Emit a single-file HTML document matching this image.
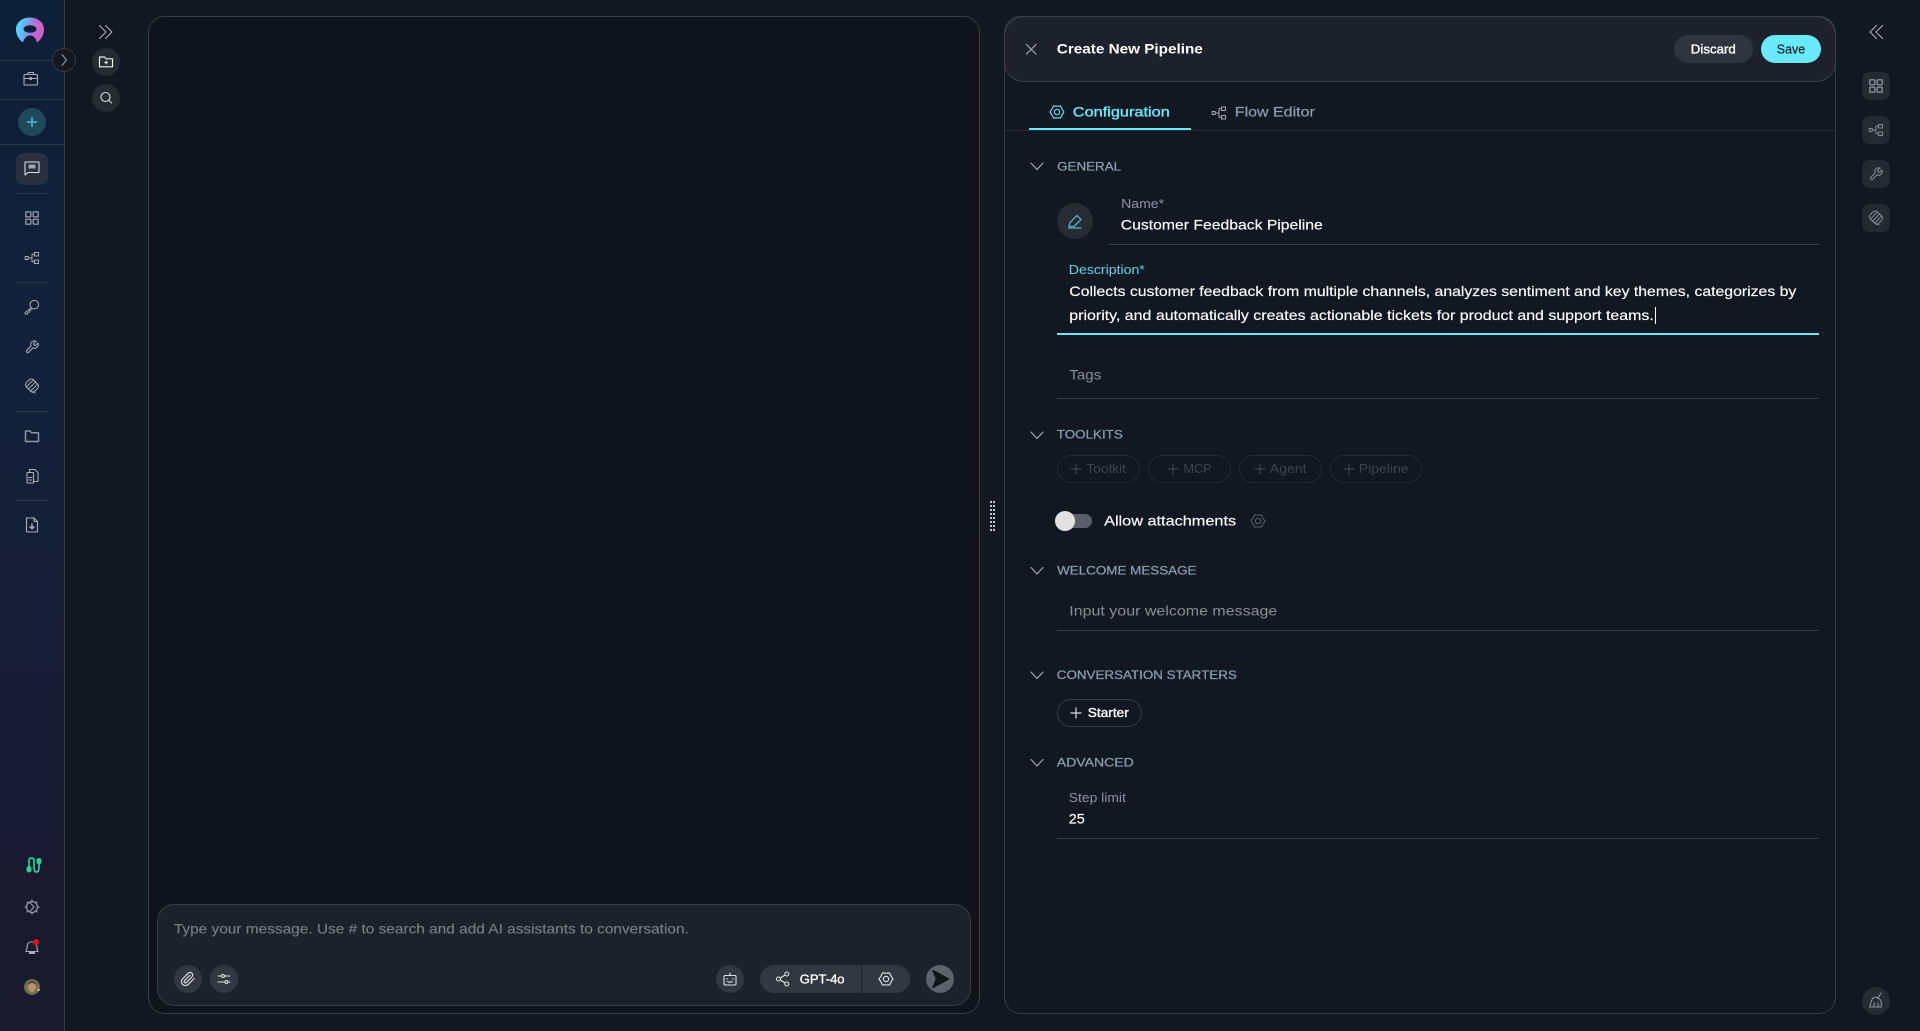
<!DOCTYPE html>
<html lang="en"><head><meta charset="utf-8"><title>Create New Pipeline</title>
<style>
html,body{margin:0;padding:0;width:1920px;height:1031px;overflow:hidden;background:#111822}
.a{position:absolute;box-sizing:border-box}
svg{position:absolute;left:0;top:0}
text{font-family:"Liberation Sans",sans-serif;white-space:pre}
.ic{fill:none;stroke-linecap:round;stroke-linejoin:round}
</style></head><body>
<div class="a" style="left:0;top:0;width:65px;height:1031px;background:linear-gradient(180deg,#0e1f38 0%,#13203a 40%,#1a1a2f 85%,#1a192e 100%);border-right:1px solid #383c46"></div>
<div class="a" style="left:148px;top:16px;width:832px;height:998px;background:#0e131c;border:1px solid #3a3d46;border-radius:17px"></div>
<div class="a" style="left:157px;top:904px;width:814px;height:102px;background:#1d212b;border:1px solid #3a3d47;border-radius:17px"></div>
<div class="a" style="left:1004px;top:16px;width:832px;height:998px;background:#111822;border:1px solid #3a3d46;border-radius:17px"></div>
<div class="a" style="left:1004px;top:16px;width:832px;height:66px;background:#1d212b;border:1px solid #3a3d46;border-radius:20px"></div>
<div class="a" style="left:1005px;top:130px;width:830px;height:1px;background:#2a2e37"></div>
<div class="a" style="left:1029px;top:128px;width:162px;height:2px;background:#6ae9fd"></div>
<div class="a" style="left:1674px;top:35px;width:79px;height:28px;background:#30343e;border-radius:14px"></div>
<div class="a" style="left:1761px;top:35px;width:60px;height:28px;background:#6ae9fd;border-radius:14px"></div>
<div class="a" style="left:1109px;top:244px;width:710px;height:1px;background:#3a3d46"></div>
<div class="a" style="left:1057px;top:333px;width:762px;height:2px;background:#6ae9fd"></div>
<div class="a" style="left:1057px;top:398px;width:762px;height:1px;background:#3a3d46"></div>
<div class="a" style="left:1057px;top:630px;width:762px;height:1px;background:#3a3d46"></div>
<div class="a" style="left:1057px;top:838px;width:762px;height:1px;background:#3a3d46"></div>
<div class="a" style="left:1655px;top:307px;width:1px;height:17px;background:#fff"></div>
<div class="a" style="left:1057px;top:455px;width:83px;height:28px;border:1px solid #262a33;border-radius:14px"></div>
<div class="a" style="left:1148px;top:455px;width:83px;height:28px;border:1px solid #262a33;border-radius:14px"></div>
<div class="a" style="left:1239px;top:455px;width:83px;height:28px;border:1px solid #262a33;border-radius:14px"></div>
<div class="a" style="left:1330px;top:455px;width:92px;height:28px;border:1px solid #262a33;border-radius:14px"></div>
<div class="a" style="left:1057px;top:699px;width:85px;height:28px;border:1px solid #3a3d46;border-radius:14px"></div>
<div class="a" style="left:1058px;top:514px;width:34px;height:14px;background:#5b5f68;border-radius:7px"></div>
<div class="a" style="left:1055px;top:511px;width:20px;height:20px;background:#e2e2e2;border-radius:50%"></div>
<div class="a" style="left:760px;top:965px;width:150px;height:28px;background:#333741;border-radius:14px"></div>
<div class="a" style="left:861px;top:965px;width:1px;height:28px;background:#1d212b"></div>
<div class="a" style="left:16px;top:153px;width:32px;height:32px;background:#2a3040;border-radius:8px"></div>
<div class="a" style="left:0;top:60px;width:64px;height:1px;background:#2c3446"></div>
<div class="a" style="left:0;top:99px;width:64px;height:1px;background:#2c3446"></div>
<div class="a" style="left:0;top:144px;width:64px;height:1px;background:#2c3446"></div>
<div class="a" style="left:16px;top:193px;width:32px;height:1px;background:#2c3446"></div>
<div class="a" style="left:16px;top:282px;width:32px;height:1px;background:#2c3446"></div>
<div class="a" style="left:16px;top:411px;width:32px;height:1px;background:#2c3446"></div>
<div class="a" style="left:16px;top:500px;width:32px;height:1px;background:#2c3446"></div>
<div class="a" style="left:1862px;top:72px;width:28px;height:28px;background:#252932;border-radius:8px"></div>
<div class="a" style="left:1862px;top:116px;width:28px;height:28px;background:#252932;border-radius:8px"></div>
<div class="a" style="left:1862px;top:160px;width:28px;height:28px;background:#252932;border-radius:8px"></div>
<div class="a" style="left:1862px;top:204px;width:28px;height:28px;background:#252932;border-radius:8px"></div>

<svg width="1920" height="1031" viewBox="0 0 1920 1031" xmlns="http://www.w3.org/2000/svg">
<defs>
<linearGradient id="lg" x1="0" y1="0" x2="1" y2="0.2"><stop offset="0" stop-color="#4fe6f8"/><stop offset=".35" stop-color="#5fb8f4"/><stop offset=".7" stop-color="#b06be0"/><stop offset="1" stop-color="#d45fc0"/></linearGradient>
<linearGradient id="lt" x1="0" y1="0" x2="1" y2="0"><stop offset="0" stop-color="#7f9cb0"/><stop offset=".55" stop-color="#a89aa0"/><stop offset="1" stop-color="#f59a6a"/></linearGradient>
<radialGradient id="av"><stop offset="0" stop-color="#a88a6c"/><stop offset=".65" stop-color="#7a6e50"/><stop offset="1" stop-color="#5d7050"/></radialGradient>
</defs>

<!-- logo -->
<path d="M23 42.500C18.500 39.500 16 34 16 29.500 16 22.500 22 17.500 30 17.500S44 22.500 44 29.500C44 34 41.500 39.500 37 42.500 36 38.500 33.500 35.500 30 35.500S24 38.500 23 42.500Z" fill="url(#lg)"/>
<path d="M20.500 29C21 21.500 39 20.500 40.500 28.500 38.500 24.500 35 23.800 30 23.800 25 23.800 22 25 20.500 29Z" fill="url(#lt)"/>
<ellipse cx="30" cy="29" rx="6.500" ry="3.800" fill="#10203a"/>

<!-- expand circle -->
<circle cx="64" cy="60" r="11.500" fill="#13171f" stroke="#34383f"/>
<path class="ic" d="M62 54.500 66.500 60 62 65.500" stroke="#9aa0aa" stroke-width="1"/>

<!-- sidebar icons -->
<g class="ic" stroke="#a7adb8" stroke-width="1.100">
<g transform="translate(31,79)"><rect x="-7" y="-4.500" width="13.500" height="10.500" rx="1"/><path d="M-3-4.500V-6.500H2.500V-4.500M-7-0.500 -1-0.500M.5-.5H6.500"/><rect x="-1" y="-1.500" width="1.500" height="2" /></g>
<g transform="translate(32,168)" stroke="#e4e6ea" stroke-width="1"><path d="M-7-6H7V4.500H-4L-7 7Z"/><rect x="-3.500" y="-3.500" width="7" height="4" fill="#a0a4ae" stroke="none"/></g>
<g transform="translate(32,218)" stroke="#8d95a3" stroke-width="1.400"><rect x="-6.200" y="-6.200" width="5" height="5" rx=".6"/><rect x="1.200" y="-6.200" width="5" height="5" rx=".6"/><rect x="-6.200" y="1.200" width="5" height="5" rx=".6"/><rect x="1.200" y="1.200" width="5" height="5" rx=".6"/></g>
<g transform="translate(32,258)" stroke-width="1"><rect x="-6.800" y="-1.500" width="3" height="3"/><rect x="2.500" y="-5.500" width="4" height="3.500"/><rect x="2.500" y="2" width="4" height="3.500"/><path d="M-3.800 0H0M0 0V-3.800H2.500M0 0V3.800H2.500"/></g>
<g transform="translate(32,307)" stroke-width="1"><circle cx="2.300" cy="-2.300" r="4.300"/><path d="M-.8.800-6.800 5.500V7H-4.500L-4 5.200-2.500 5-2.200 3.300-.3 2.800"/></g>
<g transform="translate(32,347) scale(.62) translate(-12,-12)" stroke-width="1.700"><path d="M14.700 6.300a1 1 0 0 0 0 1.400l1.600 1.600a1 1 0 0 0 1.400 0l3.770-3.770a6 6 0 0 1-7.940 7.940l-6.910 6.910a2.120 2.120 0 0 1-3-3l6.910-6.910a6 6 0 0 1 7.940-7.940l-3.760 3.760z"/></g>
<g transform="translate(32,385.500) rotate(45)" stroke-width="1"><rect x="-6" y="-5" width="12" height="10" rx="3"/><path d="M-3-5V5M0-5V5M3-5V5"/><path d="M4 5 7.500 3"/></g>
<g transform="translate(32,436)" stroke="#8d95a3" stroke-width="1.500"><path d="M-6.500-5H-2L-.5-3.300H6.500V5.500H-6.500Z"/></g>
<g transform="translate(32,476)"><path d="M-5-3.500H1.500V7H-5Z"/><path d="M-2.500-3.500V-6.500H3L6-3.500V5.500H1.500"/><path d="M-3.300 1.500H-.3M-3.300 4H-.3"/></g>
<g transform="translate(32,525)"><path d="M-5.500-7H2L5.500-3.500V7H-5.500Z"/><path d="M2-7V-3.500H5.500"/><path d="M0-1V3M-2 1.800 0 3.800 2 1.800" stroke-width="1.400"/></g>
<g transform="translate(32,907)" stroke="#8d95a3" stroke-width="1.300"><circle r="5.500"/><path d="M0-5.500V-7M0 5.500V7M-5.500 0H-7M5.500 0H7M-3.900-3.900-4.900-4.900M3.900-3.900 4.900-4.900M-3.900 3.900-4.900 4.900M3.900 3.900 4.900 4.900M-2-4.500 2 0-2 4.500"/></g>
<g transform="translate(32,947)"><path d="M-6 4.500C-5 3-5-1-4.500-2.500-3.500-6 3.500-6 4.500-2.500 5-1 5 3 6 4.500Z"/><rect x="-2.500" y="5" width="5" height="1.500" fill="#a7adb8"/></g>
</g>
<circle cx="32" cy="122" r="14" fill="#1f4a5c"/>
<path d="M27 122h10M32 117v10" stroke="#45b3c9" stroke-width="1.700"/>
<circle cx="36" cy="942" r="3" fill="#e0101c"/>
<path class="ic" d="M29 869V861Q29 858 31.500 858T34 861V867Q34 872 36.500 872T39 867V861" stroke="#27d396" stroke-width="1.700"/>
<rect x="26.500" y="866" width="5" height="6.500" rx="2.500" fill="#27d396"/>
<rect x="36.500" y="858" width="5" height="6.500" rx="2.500" fill="#27d396"/>
<circle cx="32" cy="987" r="8" fill="url(#av)"/>
<ellipse cx="32" cy="987" rx="3.800" ry="5.200" fill="#b8916e"/>
<path d="M28.500 984q3.500-4 7 0" stroke="#4a3a2a" stroke-width="1.500" fill="none"/>
<circle cx="38.500" cy="990" r="1.200" fill="#cfcc98"/>

<!-- second column -->
<path class="ic" d="M99.500 25.500 106 32 99.500 38.500M105.500 25.500 112 32 105.500 38.500" stroke="#aab0ba" stroke-width="1.100"/>
<circle cx="106" cy="62" r="14" fill="#262b34"/>
<path d="M99.500 57h5l1.500 1.800h6.500v8h-13Z" fill="none" stroke="#eceef0" stroke-width="1.200" stroke-linejoin="round"/>
<path d="M104.500 62.500h3.500M106.200 60.800v3.500" stroke="#eceef0" stroke-width="1.200"/>
<circle cx="106" cy="98" r="14" fill="#262b34"/>
<circle cx="105.500" cy="97" r="4.500" fill="none" stroke="#d8dade" stroke-width="1.100"/>
<path d="M109 100.500l2.500 2.500" stroke="#d8dade" stroke-width="1.100" stroke-linecap="round"/>

<!-- chat input buttons -->
<circle cx="188" cy="979" r="14" fill="#333741"/>
<circle cx="224" cy="979" r="14" fill="#333741"/>
<circle cx="730" cy="979" r="14" fill="#333741"/>
<circle cx="940" cy="979" r="14" fill="#5e626c"/>
<g class="ic" stroke="#dfe1e5">
<g transform="translate(188,979) scale(.66) translate(-12,-12)" stroke-width="1.700"><path d="m21.440 11.050-9.190 9.190a6 6 0 0 1-8.490-8.490l8.570-8.570A4 4 0 1 1 18 8.840l-8.590 8.570a2 2 0 0 1-2.830-2.830l8.490-8.480"/></g>
<g transform="translate(224,979)" stroke-width="1.100"><path d="M-6-3H-2.500M.5-3H6M-6 3H1M4 3H6"/><circle cx="-1" cy="-3" r="1.500"/><circle cx="2.500" cy="3" r="1.500"/></g>
<g transform="translate(730,979)" stroke-width="1.100"><rect x="-6" y="-3.500" width="12" height="9.500" rx="1.200"/><path d="M0-3.500V-6M-2.300 2.500Q0 4 2.300 2.500M-3-.5V.3M3-.5V.3"/></g>
<g transform="translate(783,979)" stroke-width="1.100"><circle cx="-4.500" r="2"/><circle cx="3.800" cy="-5" r="2"/><circle cx="3.800" cy="5" r="2"/><path d="M-2.700-1 2-4M-2.700 1 2 4"/></g>
<g transform="translate(886,979)" stroke-width="1.100"><path d="M7 0Q4.850 2.800 3.500 6.060Q0 5.600 -3.500 6.060Q-4.850 2.800 -7 0Q-4.850 -2.800 -3.500 -6.060Q0 -5.600 3.500 -6.060Q4.850 -2.800 7 0Z"/><circle r="2.700"/></g>
</g>
<path d="M933 970.500 948.500 979 933 987.500 936.500 979Z" fill="#10141c" stroke="#10141c" stroke-width="1.500" stroke-linejoin="round"/>

<!-- drag handle -->
<g fill="#c4c8ce">
<rect x="990" y="501" width="2" height="2"/><rect x="993" y="501" width="2" height="2"/>
<rect x="990" y="505" width="2" height="2"/><rect x="993" y="505" width="2" height="2"/>
<rect x="990" y="509" width="2" height="2"/><rect x="993" y="509" width="2" height="2"/>
<rect x="990" y="513" width="2" height="2"/><rect x="993" y="513" width="2" height="2"/>
<rect x="990" y="517" width="2" height="2"/><rect x="993" y="517" width="2" height="2"/>
<rect x="990" y="521" width="2" height="2"/><rect x="993" y="521" width="2" height="2"/>
<rect x="990" y="525" width="2" height="2"/><rect x="993" y="525" width="2" height="2"/>
<rect x="990" y="529" width="2" height="2"/><rect x="993" y="529" width="2" height="2"/>
</g>

<!-- right panel icons -->
<path class="ic" d="M1026.500 44.500 1036 54M1036 44.500 1026.500 54" stroke="#a2a8b0" stroke-width="1.200"/>
<g class="ic" transform="translate(1057,112)" stroke="#6ae9fd" stroke-width="1.100"><path d="M7 0Q4.850 2.800 3.500 6.060Q0 5.600 -3.500 6.060Q-4.850 2.800 -7 0Q-4.850 -2.800 -3.500 -6.060Q0 -5.600 3.500 -6.060Q4.850 -2.800 7 0Z"/><circle r="2.700"/></g>
<g class="ic" transform="translate(1219,113)" stroke="#a7adb8" stroke-width="1"><rect x="-6.800" y="-1.500" width="3" height="3"/><rect x="2.500" y="-6" width="4" height="3.500"/><rect x="2.500" y="2.500" width="4" height="3.500"/><path d="M-3.800 0H0M0 0V-4.200H2.500M0 0V4.200H2.500"/></g>
<g class="ic" stroke="#a0a6b0" stroke-width="1.200">
<path d="M1031 163 1037 169.500 1043 163"/><path d="M1031 432 1037 438.500 1043 432"/><path d="M1031 567.500 1037 574 1043 567.500"/><path d="M1031 672 1037 678.500 1043 672"/><path d="M1031 759.500 1037 766 1043 759.500"/>
</g>
<circle cx="1075" cy="221" r="18" fill="#262b34"/>
<path class="ic" d="M1069 226.500 1070 222.500 1077 215.500 1081 219.500 1074 226.500ZM1068.500 228H1081" stroke="#4fb3c2" stroke-width="1.300"/>
<g class="ic" stroke="#3f444e" stroke-width="1.200"><path d="M1071 469h10M1076 464v10M1168 469h10M1173 464v10M1255 469h10M1260 464v10M1344 469h10M1349 464v10"/></g>
<path class="ic" d="M1071 713h10M1076 708v10" stroke="#d8dade" stroke-width="1.200"/>
<g class="ic" transform="translate(1258,521)" stroke="#5d6169" stroke-width="1"><path d="M7 0Q4.850 2.800 3.500 6.060Q0 5.600 -3.500 6.060Q-4.850 2.800 -7 0Q-4.850 -2.800 -3.500 -6.060Q0 -5.600 3.500 -6.060Q4.850 -2.800 7 0Z"/><circle r="2.700"/></g>

<!-- right rail -->
<path class="ic" d="M1882.500 25.500 1876 32 1882.500 38.500M1876.500 25.500 1870 32 1876.500 38.500" stroke="#aab0ba" stroke-width="1.100"/>
<g class="ic" stroke="#858c99" stroke-width="1.300">
<g transform="translate(1876,86)" stroke-width="1.400"><rect x="-6.200" y="-6.200" width="5" height="5" rx=".6"/><rect x="1.200" y="-6.200" width="5" height="5" rx=".6"/><rect x="-6.200" y="1.200" width="5" height="5" rx=".6"/><rect x="1.200" y="1.200" width="5" height="5" rx=".6"/></g>
<g transform="translate(1876,130)" stroke-width="1"><rect x="-6.800" y="-1.500" width="3" height="3"/><rect x="2.500" y="-5.500" width="4" height="3.500"/><rect x="2.500" y="2" width="4" height="3.500"/><path d="M-3.800 0H0M0 0V-3.800H2.500M0 0V3.800H2.500"/></g>
<g transform="translate(1876,174) scale(.62) translate(-12,-12)" stroke-width="1.700"><path d="M14.700 6.300a1 1 0 0 0 0 1.400l1.600 1.600a1 1 0 0 0 1.400 0l3.770-3.770a6 6 0 0 1-7.940 7.940l-6.910 6.910a2.120 2.120 0 0 1-3-3l6.910-6.910a6 6 0 0 1 7.940-7.940l-3.760 3.760z"/></g>
<g transform="translate(1876,217.500) rotate(45)" stroke-width="1"><rect x="-6" y="-5" width="12" height="10" rx="3"/><path d="M-3-5V5M0-5V5M3-5V5"/><path d="M4 5 7.500 3"/></g>
</g>
<circle cx="1876" cy="1001" r="14" fill="#262b34"/>
<path class="ic" d="M1881 993 1877.500 998.500M1873 998C1875 996.500 1878 997 1880 999.500 1881 1001 1881.500 1004 1881.500 1007H1869.500C1871 1005 1870.500 1001 1873 998ZM1874.500 1003 1873.500 1007M1878 1003 1878.500 1007" stroke="#8a909c" stroke-width="1.100"/>

<!-- text -->
<g font-size="14" fill="#fff" transform="translate(-.2,-.5)">
<text x="1057" y="54" font-weight="700" font-size="14" textLength="146" lengthAdjust="spacingAndGlyphs">Create New Pipeline</text>
<text x="1691" y="54" font-size="13" stroke="#fff" stroke-width=".35" textLength="45" lengthAdjust="spacingAndGlyphs">Discard</text>
<text x="1777" y="54" font-size="13" fill="#0e1a22" stroke="#0e1a22" stroke-width=".15" textLength="28.300" lengthAdjust="spacingAndGlyphs">Save</text>
<text x="1073" y="117" fill="#6ae9fd" stroke="#6ae9fd" stroke-width=".35" textLength="97" lengthAdjust="spacingAndGlyphs">Configuration</text>
<text x="1235" y="117" fill="#8e9db2" stroke="#8e9db2" stroke-width=".2" textLength="80" lengthAdjust="spacingAndGlyphs">Flow Editor</text>
<g font-size="12.200" fill="#8c9cb2" stroke="#8c9cb2" stroke-width=".25">
<text x="1057.300" y="171.200" textLength="64" lengthAdjust="spacingAndGlyphs">GENERAL</text>
<text x="1057" y="439.200" textLength="66" lengthAdjust="spacingAndGlyphs">TOOLKITS</text>
<text x="1057.300" y="575.200" textLength="139.400" lengthAdjust="spacingAndGlyphs">WELCOME MESSAGE</text>
<text x="1057" y="679.500" textLength="180" lengthAdjust="spacingAndGlyphs">CONVERSATION STARTERS</text>
<text x="1057" y="767.200" textLength="77" lengthAdjust="spacingAndGlyphs">ADVANCED</text>
</g>
<text x="1121.300" y="208.500" font-size="12.500" fill="#8a94a2" textLength="43" lengthAdjust="spacingAndGlyphs">Name*</text>
<g stroke="#fff" stroke-width=".15">
<text x="1121" y="230" textLength="202" lengthAdjust="spacingAndGlyphs">Customer Feedback Pipeline</text>
<text x="1069.500" y="296.500" textLength="727" lengthAdjust="spacingAndGlyphs">Collects customer feedback from multiple channels, analyzes sentiment and key themes, categorizes by</text>
<text x="1069.500" y="320.500" textLength="584.500" lengthAdjust="spacingAndGlyphs">priority, and automatically creates actionable tickets for product and support teams.</text>
<text x="1104.300" y="526" textLength="132" lengthAdjust="spacingAndGlyphs">Allow attachments</text>
<text x="1069" y="824" textLength="16" lengthAdjust="spacingAndGlyphs">25</text>
</g>
<text x="1069" y="274.500" font-size="12.500" fill="#5fd8e8" textLength="76" lengthAdjust="spacingAndGlyphs">Description*</text>
<text x="1069.500" y="380" fill="#8a8e96" textLength="32" lengthAdjust="spacingAndGlyphs">Tags</text>
<g font-size="13" fill="#3f444e">
<text x="1086.300" y="473.500" textLength="40" lengthAdjust="spacingAndGlyphs">Toolkit</text>
<text x="1183.700" y="473.500" textLength="28" lengthAdjust="spacingAndGlyphs">MCP</text>
<text x="1270" y="473.500" textLength="36.700" lengthAdjust="spacingAndGlyphs">Agent</text>
<text x="1359" y="473.500" textLength="49.700" lengthAdjust="spacingAndGlyphs">Pipeline</text>
</g>
<text x="1069.500" y="616" fill="#8a8e96" textLength="208" lengthAdjust="spacingAndGlyphs">Input your welcome message</text>
<text x="1088" y="717.500" font-size="13" stroke="#fff" stroke-width=".35" textLength="41" lengthAdjust="spacingAndGlyphs">Starter</text>
<text x="1069" y="802.500" font-size="12.500" fill="#8a94a2" textLength="57" lengthAdjust="spacingAndGlyphs">Step limit</text>
<text x="174" y="934" fill="#7b7e85" stroke="#7b7e85" stroke-width=".12" textLength="515" lengthAdjust="spacingAndGlyphs">Type your message. Use # to search and add AI assistants to conversation.</text>
<text x="800" y="984" font-size="13" stroke="#fff" stroke-width=".35" textLength="44.700" lengthAdjust="spacingAndGlyphs">GPT-4o</text>
</g>
</svg>
</body></html>
